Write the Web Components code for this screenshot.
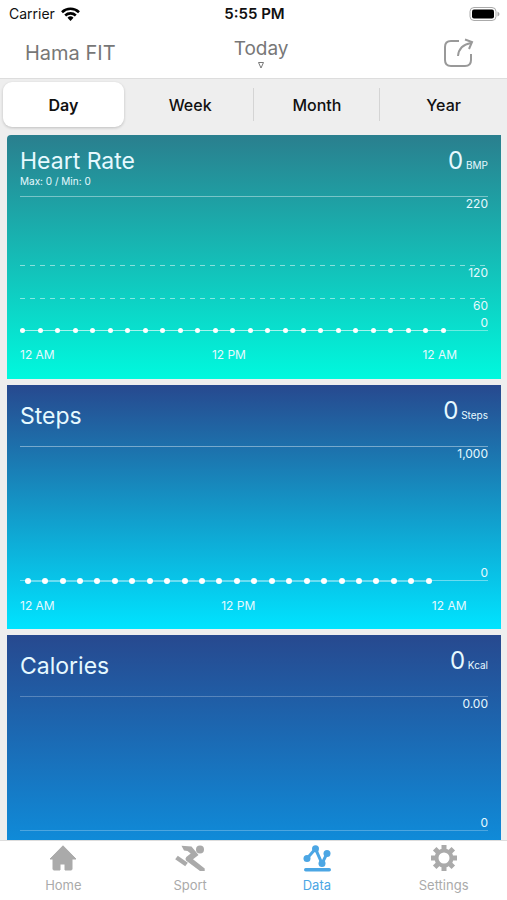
<!DOCTYPE html>
<html lang="en">
<head>
<meta charset="utf-8">
<meta name="viewport" content="width=device-width, initial-scale=1">
<title>Hama FIT</title>
<style>
    body {
        margin: 0;
        height: 100vh;
        display: flex;
        flex-direction: column;
        background: #eee;
        font-family: Inter, "Liberation Sans", sans-serif;
        --grey: #777;
        --accent: #4ba6e4;
    }

    main {
        flex: 1;
        min-height: 0;
        overflow-y: auto;
        scrollbar-width: none;
        display: flex;
        flex-direction: column;
        gap: 6px;
        padding: 4px 6px 6px 7px;
    }
</style>
</head>
<body>
    <status-bar carrier="Carrier" time="5:55 PM"></status-bar>
    <app-header>
        Hama FIT
        <span slot="date">Today</span>
    </app-header>
    <period-picker periods="Day,Week,Month,Year" selected="Day"></period-picker>
    <main>
        <metric-card class="heart" unit="BMP" value="0" points="25" baseline="0">
            Heart Rate
            <span slot="detail">Max: 0 / Min: 0</span>
            <chart-band slot="bands" size="69">220</chart-band>
            <chart-band slot="bands" size="33" dashed>120</chart-band>
            <chart-band slot="bands" size="32" dashed>60</chart-band>
        </metric-card>
        <metric-card class="steps" unit="Steps" value="0" points="24" baseline="0">
            Steps
            <chart-band slot="bands" size="134">1,000</chart-band>
        </metric-card>
        <metric-card class="calories" unit="Kcal" value="0" points="0" baseline="0">
            Calories
            <chart-band slot="bands" size="134">0.00</chart-band>
        </metric-card>
    </main>
    <tab-bar>
        <tab-link href="#home">
            <svg slot="icon" width="28" height="26" viewBox="0 0 28 26" aria-hidden="true">
                <path fill="currentColor" stroke="currentColor" stroke-linejoin="round" d="M14 .8 1 14h3v10q0 1 1 1h6v-6h5v6h6q1 0 1-1V14h4Z"/>
            </svg>
            Home
        </tab-link>
        <tab-link href="#sport">
            <svg slot="icon" width="30" height="27" viewBox="0 0 30 27" aria-hidden="true">
                <circle cx="25" cy="4.500" r="4" fill="currentColor"/>
                <path fill="currentColor" d="M6.500.800 16.500 1.500l7 8.500-5.500 4.300 11.700 9.200V26H25L11 15.500q-1.200-1.800.3-3.500l4.400-3.500L12.500 6l-3.500-.5Z"/>
                <path fill="none" stroke="currentColor" stroke-width="4.500" d="m1.500 12.500 10 7"/>
            </svg>
            Sport
        </tab-link>
        <tab-link href="#data" current>
            <svg slot="icon" width="28" height="27" viewBox="0 0 28 27" aria-hidden="true">
                <g fill="currentColor">
                    <circle cx="4" cy="13.500" r="3.500"/>
                    <circle cx="12.500" cy="3.800" r="3.500"/>
                    <circle cx="19" cy="18.500" r="3.500"/>
                    <circle cx="24" cy="8.500" r="3.500"/>
                    <rect x="1" y="23" width="27" height="3.500" rx="1.700"/>
                </g>
                <path d="m4 13.500 8.500-9.700L19 18.500l5-10" fill="none" stroke="currentColor" stroke-width="3"/>
            </svg>
            Data
        </tab-link>
        <tab-link href="#settings">
            <svg slot="icon" width="26" height="26" viewBox="-13 -13 26 26" aria-hidden="true">
                <circle r="7.500" fill="none" stroke="currentColor" stroke-width="4"/>
                <path stroke="currentColor" stroke-width="5" d="M0-8v-5M0 8v5M-8 0h-5M8 0h5M-6-6l-3.300-3.300M6-6l3.300-3.300M-6 6l-3.300 3.300M6 6l3.300 3.300"/>
            </svg>
            Settings
        </tab-link>
    </tab-bar>

<script>
    const template = (html) => {
        const tmpl = document.createElement('template');
        tmpl.innerHTML = html;
        return tmpl;
    };

    // Shared base: clones the element's template into an open shadow root
    class BaseElement extends HTMLElement {
        constructor() {
            super();
            this.attachShadow({ mode: 'open' });
            this.shadowRoot.appendChild(
                this.constructor.tmpl.content.cloneNode(true)
            );
        }

        $(selector) {
            return this.shadowRoot.querySelector(selector);
        }
    }

    class StatusBar extends BaseElement {
        static tmpl = template(`
            <style>
                :host {
                    display: grid;
                    grid-template-columns: 1fr auto 1fr;
                    align-items: center;
                    flex: none;
                    height: 27px;
                    padding: 0 7px 0 9px;
                    background: #fff;
                    color: #111;
                    font-size: 14px;
                }
                .carrier {
                    display: flex;
                    align-items: center;
                    gap: 6px;
                }
                .time {
                    font-size: 15px;
                    font-weight: 600;
                }
                .battery {
                    justify-self: end;
                }
            </style>
            <span class="carrier">
                <span id="carrier"></span>
                <svg width="19" height="14" viewBox="0 0 19 14" aria-hidden="true">
                    <g fill="none" stroke="#000" stroke-width="2.600">
                        <path d="M1 5.200a12.300 12.300 0 0 1 17 0"/>
                        <path d="M4.200 8.500a7.700 7.700 0 0 1 10.600 0"/>
                    </g>
                    <path d="m9.500 14-3-3.200a4.300 4.300 0 0 1 6 0Z"/>
                </svg>
            </span>
            <span class="time"></span>
            <svg class="battery" width="31" height="14" viewBox="0 0 31 14" role="img" aria-label="Battery full">
                <rect x="1" y=".5" width="26" height="13" rx="4" fill="#fff" stroke="#aaa"/>
                <rect x="3" y="2.500" width="22" height="9" rx="2"/>
                <path d="M28.500 4.500q2 1 2 2.500t-2 2.500Z" fill="#aaa"/>
            </svg>
        `);

        connectedCallback() {
            this.$('#carrier').textContent = this.getAttribute('carrier');
            this.$('.time').textContent = this.getAttribute('time');
        }
    }

    class AppHeader extends BaseElement {
        static tmpl = template(`
            <style>
                :host {
                    display: grid;
                    /* the date sits a little right of the middle */
                    grid-template-columns: 9fr auto 8fr;
                    align-items: center;
                    flex: none;
                    height: 51px;
                    padding: 0 33px 0 25px;
                    background: #fff;
                    border-bottom: 1px solid #ddd;
                    color: var(--grey);
                }
                h1 {
                    margin: 0;
                    font-size: 20px;
                    font-weight: 400;
                }
                button {
                    padding: 0;
                    border: 0;
                    background: none;
                    font: inherit;
                    color: inherit;
                    cursor: pointer;
                }
                .date {
                    display: flex;
                    flex-direction: column;
                    align-items: center;
                    gap: 1px;
                    font-size: 19px;
                    line-height: 24px;
                }
                .share {
                    justify-self: end;
                    color: #999;
                }
                svg {
                    display: block;
                }
            </style>
            <h1><slot></slot></h1>
            <button class="date">
                <slot name="date"></slot>
                <svg width="6" height="7" viewBox="0 0 6 7" aria-hidden="true">
                    <path d="M.5.500h5L3 6Z" fill="none" stroke="currentColor"/>
                </svg>
            </button>
            <button class="share" aria-label="Share">
                <svg width="31" height="30" viewBox="0 0 31 30" fill="none" stroke="currentColor" stroke-width="2">
                    <path d="M16 3H8Q2 3 2 9v13q0 6 6 6h14q6 0 6-6v-6"/>
                    <path d="M15 18q1-11 13-13"/>
                    <path d="m22 1.500 7 2.500-3 7"/>
                </svg>
            </button>
        `);
    }

    class PeriodPicker extends BaseElement {
        static tmpl = template(`
            <style>
                :host {
                    display: grid;
                    grid-auto-flow: column;
                    grid-auto-columns: 1fr;
                    flex: none;
                    height: 45px;
                    padding: 3px 0 4px;
                }
                button {
                    position: relative;
                    margin: 0 3px;
                    padding: 0;
                    border: 0;
                    border-radius: 9px;
                    background: none;
                    color: #111;
                    font: 500 16px/44px Inter, "Liberation Sans", sans-serif;
                    cursor: pointer;
                }
                button[aria-pressed="true"] {
                    background: #fff;
                    box-shadow: 0 1px 3px rgba(0, 0, 0, .2);
                    font-weight: 600;
                }
                /* no divider next to the selected period */
                button[aria-pressed="false"] + button::before {
                    content: "";
                    position: absolute;
                    left: -4px;
                    top: 6px;
                    bottom: 6px;
                    border-left: 1px solid #d4d4d4;
                }
            </style>
        `);

        connectedCallback() {
            this.getAttribute('periods').split(',').forEach((period) => {
                const btn = document.createElement('button');
                btn.textContent = period;
                btn.onclick = () => this.select(period);
                this.shadowRoot.appendChild(btn);
            });
            this.select(this.getAttribute('selected'));
        }

        select(period) {
            this.shadowRoot.querySelectorAll('button').forEach((btn) => {
                btn.setAttribute('aria-pressed', btn.textContent === period);
            });
        }
    }

    // One horizontal band of a chart, its label under its top line
    class ChartBand extends BaseElement {
        static tmpl = template(`
            <style>
                :host {
                    display: block;
                    box-sizing: border-box;
                    background: linear-gradient(var(--line), var(--line)) top / 100% 1px no-repeat;
                    text-align: right;
                    font-size: 12px;
                    line-height: 16px;
                }
                :host([dashed]) {
                    --line: rgba(255, 255, 255, .5);
                    background: repeating-linear-gradient(90deg, var(--line) 0 5px, transparent 5px 10px) top / 100% 1px no-repeat;
                }
            </style>
            <slot></slot>
        `);

        connectedCallback() {
            this.style.height = this.getAttribute('size') + 'px';
        }
    }

    class MetricCard extends BaseElement {
        static tmpl = template(`
            <style>
                :host {
                    --line: rgba(255, 255, 255, .4);
                    --dot: 6px;
                    --from: #27498f;
                    --to: #00e4ff;
                    --times: 43fr 45fr 12fr;
                    --inset: 0 12% 0 1%;
                    display: block;
                    box-sizing: border-box;
                    flex: none;
                    height: 244px;
                    padding: 0 13px;
                    background: linear-gradient(var(--from), var(--to));
                    color: #e6f9ff;
                }
                :host(.heart) {
                    --dot: 5px;
                    --from: #2a7f8e;
                    --to: #00f9de;
                    --times: 41fr 45fr 14fr;
                    --inset: 0 9% 0 0;
                    border-top-left-radius: 4px;
                }
                :host(.calories) {
                    --line: rgba(255, 255, 255, .25);
                    --to: #0b97e6;
                }
                header {
                    display: flex;
                    justify-content: space-between;
                    height: 61px;
                }
                .titles {
                    display: flex;
                    flex-direction: column;
                    justify-content: center;
                    font-size: 10px;
                    line-height: 10px;
                }
                h2 {
                    margin: 0;
                    font-size: 23px;
                    font-weight: 400;
                    line-height: 30px;
                }
                .reading {
                    padding-top: 11px;
                    font-size: 10px;
                    line-height: 30px;
                }
                .value {
                    font-size: 24px;
                }
                .plot {
                    position: relative;
                    border-bottom: 1px solid var(--line);
                }
                .baseline {
                    position: absolute;
                    right: 0;
                    bottom: 0;
                    font-size: 12px;
                    line-height: 14px;
                }
                .series {
                    display: flex;
                    justify-content: space-between;
                    height: var(--dot);
                    margin: -3px 0 0;
                    padding: var(--inset);
                    position: relative;
                    background: linear-gradient(var(--line), var(--line)) center / 100% 1px no-repeat content-box;
                }
                .series i {
                    width: var(--dot);
                    border-radius: 50%;
                    background: #fff;
                }
                .times {
                    display: grid;
                    grid-template-columns: var(--times);
                    padding-top: 14px;
                    font-size: 12px;
                    line-height: 16px;
                    white-space: nowrap;
                }
                .times span {
                    min-width: 0;
                }
                [hidden] {
                    display: none;
                }
            </style>
            <header>
                <div class="titles">
                    <h2><slot></slot></h2>
                    <slot name="detail"></slot>
                </div>
                <div class="reading"><span class="value"></span> <span class="unit"></span></div>
            </header>
            <div class="plot">
                <slot name="bands"></slot>
                <span class="baseline"></span>
            </div>
            <div class="series"></div>
            <div class="times"><span>12 AM</span><span>12 PM</span><span>12 AM</span></div>
        `);

        connectedCallback() {
            ['value', 'unit', 'baseline'].forEach((name) => {
                this.$('.' + name).textContent = this.getAttribute(name);
            });

            // Without readings there is no series and no time axis
            const points = Number(this.getAttribute('points'));
            const series = this.$('.series');
            series.hidden = !points;
            if (!points) {
                this.$('.times').remove();
            }
            for (let i = 0; i < points; i++) {
                series.appendChild(document.createElement('i'));
            }
        }
    }

    class TabBar extends BaseElement {
        static tmpl = template(`
            <style>
                :host {
                    display: block;
                    flex: none;
                    background: #fff;
                    border-top: 1px solid #ddd;
                }
                nav {
                    display: grid;
                    grid-auto-flow: column;
                    grid-auto-columns: 1fr;
                    height: 59px;
                }
            </style>
            <nav><slot></slot></nav>
        `);
    }

    class TabLink extends BaseElement {
        static tmpl = template(`
            <style>
                :host {
                    display: block;
                    color: #aaa;
                }
                :host([current]) {
                    color: var(--accent);
                }
                a {
                    display: flex;
                    flex-direction: column;
                    align-items: center;
                    padding-top: 4px;
                    color: inherit;
                    text-decoration: none;
                    font-size: 13px;
                    line-height: 18px;
                }
                .icon {
                    display: flex;
                    height: 31px;
                }
                ::slotted(svg) {
                    display: block;
                }
            </style>
            <a>
                <span class="icon"><slot name="icon"></slot></span>
                <span><slot></slot></span>
            </a>
        `);

        connectedCallback() {
            const link = this.$('a');
            link.href = this.getAttribute('href');
            if (this.hasAttribute('current')) {
                link.setAttribute('aria-current', 'page');
            }
        }
    }

    window.customElements.define('status-bar', StatusBar);
    window.customElements.define('app-header', AppHeader);
    window.customElements.define('period-picker', PeriodPicker);
    window.customElements.define('chart-band', ChartBand);
    window.customElements.define('metric-card', MetricCard);
    window.customElements.define('tab-bar', TabBar);
    window.customElements.define('tab-link', TabLink);
</script>
</body>
</html>
